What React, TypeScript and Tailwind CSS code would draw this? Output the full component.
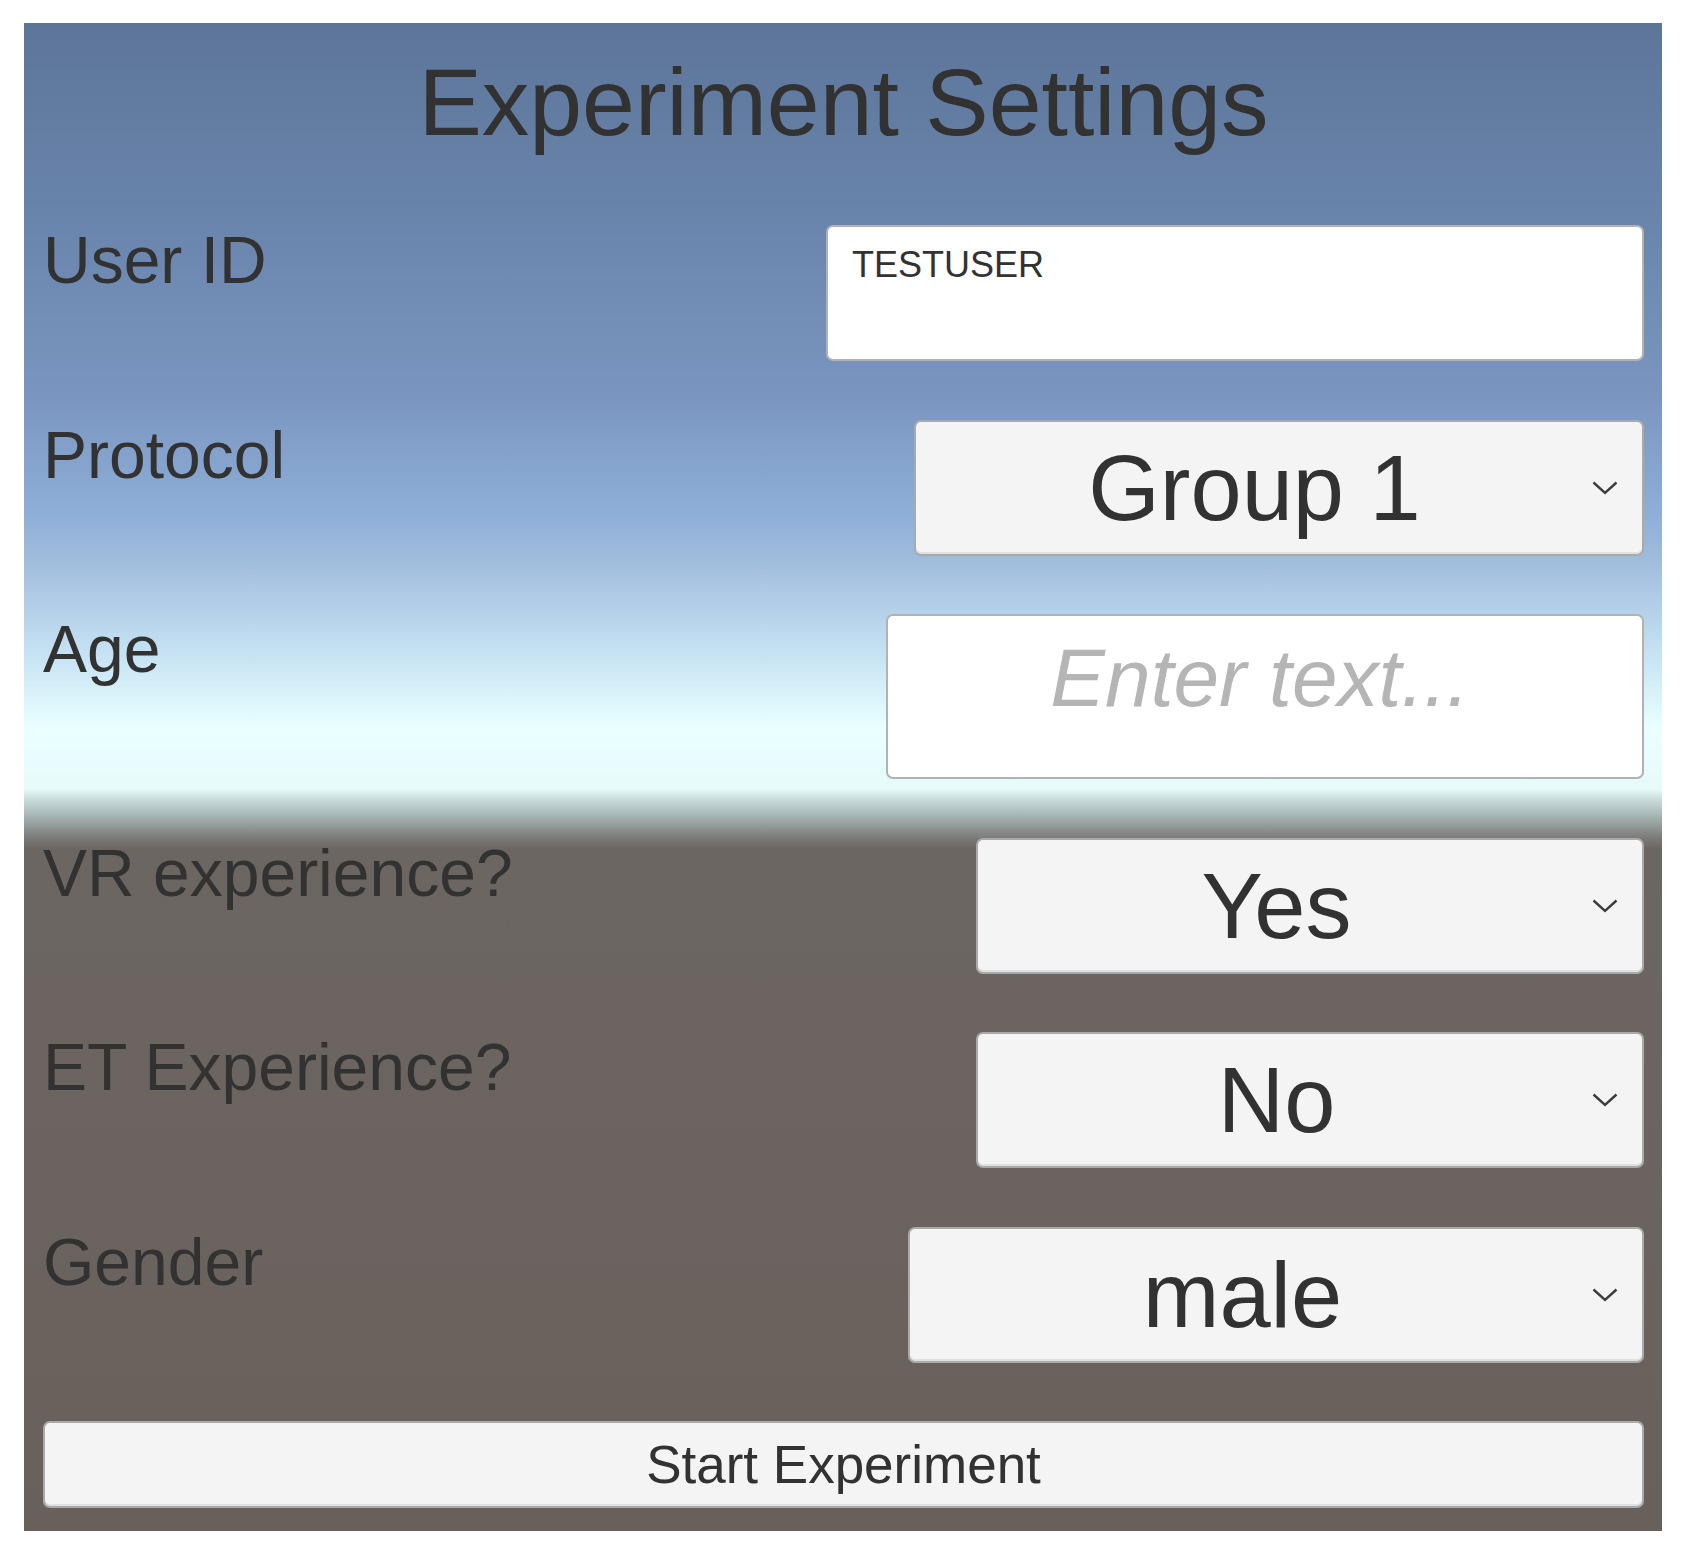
import React from 'react';

const FONT = { fontFamily: '"Liberation Sans", Arial, sans-serif' };

interface DropdownProps {
  value: string;
  width: string;
  pad?: string;
}

const Chevron: React.FC = () => (
  <svg
    className="absolute right-[24px] top-1/2 -translate-y-1/2"
    width="26"
    height="14"
    viewBox="0 0 26 14"
  >
    <polyline points="1.5,1.5 13,12 24.5,1.5" fill="none" stroke="#3c3c3c" strokeWidth="2.4" />
  </svg>
);

const Dropdown: React.FC<DropdownProps> = ({ value, width, pad = 'pl-[45px] pr-[112px]' }) => (
  <div
    className={`relative flex h-[136px] shrink-0 items-center rounded-[7px] border-2 border-black/30 bg-[#f4f4f4] shadow-[inset_0_-2px_0_rgba(0,0,0,0.08)] ${pad} ${width}`}
  >
    <span className="w-full text-center text-[92px] leading-none text-[#323232]">{value}</span>
    <Chevron />
  </div>
);

const Label: React.FC<{ text: string }> = ({ text }) => (
  <div className="mt-[2px] text-[66px] leading-none text-[#323232]">{text}</div>
);

const App: React.FC = () => {
  return (
    <div className="min-h-screen w-full bg-white pl-[24px] pt-[23px]" style={FONT}>
      <div className="flex w-[1638px] flex-col bg-[linear-gradient(to_bottom,#5d7599_0%,#6883aa_11.7%,#7a96c0_25%,#8fb0d8_33%,#a0bcdc_35.6%,#b0cce6_38.2%,#c8e4f4_42.2%,#e0f8fc_45.5%,#eaffff_46.9%,#e6fafa_50.8%,#c8dcdc_51.5%,#a0acac_52.8%,#7a7876_54.1%,#6c6662_54.8%,#68605b_100%)] pb-[23px] pl-[19px] pr-[18px] pt-[32px]">
        {/* Title */}
        <h1 className="text-center text-[95px] font-normal leading-none text-[#323232]">
          Experiment Settings
        </h1>

        {/* Form rows */}
        <div className="mt-[75px] flex flex-col gap-[58.5px]">
          <div className="flex items-start justify-between">
            <Label text="User ID" />
            <div className="h-[136px] w-[818px] rounded-[7px] border-2 border-black/30 bg-white pl-[24px] pt-[20px]">
              <span className="text-[36px] leading-none text-[#323232]">TESTUSER</span>
            </div>
          </div>

          <div className="flex items-start justify-between">
            <Label text="Protocol" />
            <Dropdown value="Group 1" width="w-[730px]" pad="pl-[54px] pr-[103px]" />
          </div>

          <div className="flex items-start justify-between">
            <Label text="Age" />
            <div className="h-[165px] w-[758px] rounded-[7px] border-2 border-black/30 bg-white pr-[10px] pt-[21px] text-center">
              <span className="text-[82px] italic leading-none text-[#b5b5b5]">Enter text...</span>
            </div>
          </div>

          <div className="flex items-start justify-between">
            <Label text="VR experience?" />
            <Dropdown value="Yes" width="w-[668px]" />
          </div>

          <div className="flex items-start justify-between">
            <Label text="ET Experience?" />
            <Dropdown value="No" width="w-[668px]" />
          </div>

          <div className="flex items-start justify-between">
            <Label text="Gender" />
            <Dropdown value="male" width="w-[736px]" />
          </div>

          <button className="flex h-[87px] w-full items-center justify-center rounded-[7px] border-2 border-black/30 bg-[#f4f4f4] text-[53px] leading-none text-[#323232] shadow-[inset_0_-2px_0_rgba(0,0,0,0.08)]">
            Start Experiment
          </button>
        </div>
      </div>
    </div>
  );
};

export default App;
